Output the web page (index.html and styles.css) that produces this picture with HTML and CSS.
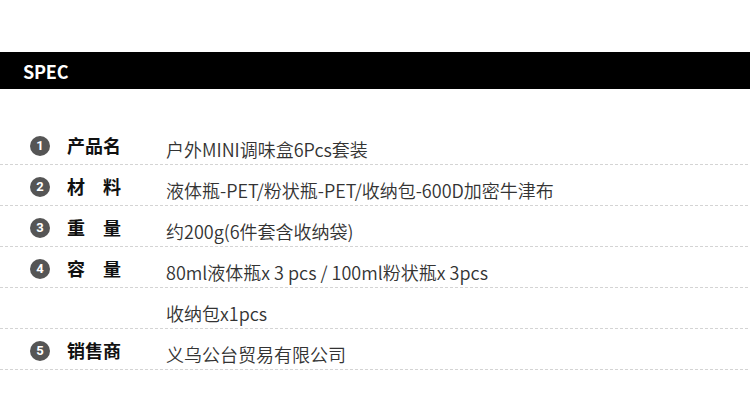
FILE: index.html
```html
<!DOCTYPE html>
<html lang="zh">
<head>
<meta charset="utf-8">
<link rel="stylesheet" href="styles.css">
</head>
<body>
<div class="bar"><span class="bar-title">SPEC</span></div>
<div class="spec">
  <div class="row"><span class="num">1</span><span class="label"><span class="lt">产品名</span></span><span class="val">户外MINI调味盒6Pcs套装</span></div>
  <div class="row"><span class="num">2</span><span class="label"><span class="lt">材料</span></span><span class="val">液体瓶-PET/粉状瓶-PET/收纳包-600D加密牛津布</span></div>
  <div class="row"><span class="num">3</span><span class="label"><span class="lt">重量</span></span><span class="val">约200g(6件套含收纳袋)</span></div>
  <div class="row"><span class="num">4</span><span class="label"><span class="lt">容量</span></span><span class="val">80ml液体瓶x 3 pcs / 100ml粉状瓶x 3pcs</span></div>
  <div class="row"><span class="num empty"></span><span class="label"></span><span class="val">收纳包x1pcs</span></div>
  <div class="row"><span class="num">5</span><span class="label"><span class="lt">销售商</span></span><span class="val">义乌公台贸易有限公司</span></div>
</div>
</body>
</html>
```

FILE: styles.css
```css
html, body {
  margin: 0;
  padding: 0;
  background: #fff;
}
body {
  width: 750px;
  height: 405px;
  overflow: hidden;
  font-family: "Noto Sans CJK SC", "Noto Sans", sans-serif;
}
.bar {
  margin-top: 52px;
  height: 37px;
  background: #000;
  display: flex;
  align-items: center;
  padding-left: 23px;
}
.bar-title {
  color: #fff;
  font-family: "Noto Sans CJK SC", "Noto Sans", sans-serif;
  font-weight: 700;
  font-size: 18px;
  line-height: 1;
  letter-spacing: -0.2px;
  margin-top: 1px;
}
.spec {
  margin-top: 35px;
}
.row {
  display: flex;
  align-items: center;
  padding-top: 9px;
  padding-left: 30px;
  box-sizing: content-box;
  height: 31px;
  border-bottom: 1px solid transparent;
  background-image: repeating-linear-gradient(to right, #d4d4d4 0 3px, transparent 3px 5px);
  background-size: 100% 1px;
  background-repeat: no-repeat;
  background-position: left bottom;
  background-origin: border-box;
}
.num {
  width: 20px;
  height: 20px;
  border-radius: 50%;
  background: #555;
  color: #fff;
  font-family: "Roboto", "Noto Sans", sans-serif;
  font-weight: 700;
  font-size: 13px;
  display: flex;
  align-items: center;
  justify-content: center;
  flex: none;
  margin-right: 17px;
  margin-top: -6px;
}
.num.empty {
  background: transparent;
}
.label {
  width: 99px;
  flex: none;
  margin-top: -7px;
  font-size: 18px;
  font-weight: 700;
  color: #111;
  line-height: 30px;
}
.lt {
  display: inline-block;
  width: 54px;
  text-align: justify;
  text-align-last: justify;
}
.val {
  font-size: 18px;
  font-weight: 350;
  color: #333;
  line-height: 30px;
  white-space: nowrap;
}
```
